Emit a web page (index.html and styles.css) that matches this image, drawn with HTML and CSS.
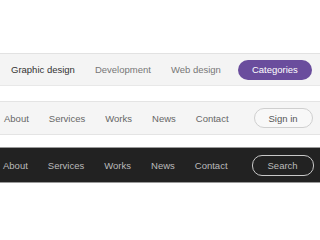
FILE: index.html
```html
<!DOCTYPE html>
<html lang="en">
<head>
    <meta charset="UTF-8">
    <title>Nav bars</title>
    <link rel="stylesheet" href="styles.css">
</head>
<body>
    <div class="bar bar_tabs">
        <a class="item active">Graphic design</a>
        <a class="item">Development</a>
        <a class="item">Web design</a>
        <a class="pill pill_purple">Categories</a>
    </div>
    <div class="bar bar_light">
        <a class="item">About</a>
        <a class="item">Services</a>
        <a class="item">Works</a>
        <a class="item">News</a>
        <a class="item">Contact</a>
        <a class="pill pill_light">Sign in</a>
    </div>
    <div class="bar bar_dark">
        <a class="item">About</a>
        <a class="item">Services</a>
        <a class="item">Works</a>
        <a class="item">News</a>
        <a class="item">Contact</a>
        <a class="pill pill_dark">Search</a>
    </div>
</body>
</html>
```

FILE: styles.css
```css
body {
    margin: 0;
    padding-top: 53px;
    background: #fff;
    font-family: "Liberation Sans", Arial, sans-serif;
    font-size: 9.5px;
}
.bar {
    box-sizing: border-box;
    display: flex;
    align-items: center;
    width: 320px;
}
.item {
    padding: 0 10px;
    white-space: nowrap;
}
.pill {
    box-sizing: border-box;
    display: flex;
    align-items: center;
    height: 20px;
    padding: 0 14px;
    border-radius: 10px;
    white-space: nowrap;
}
.bar_tabs {
    height: 33px;
    padding-left: 1px;
    background: #f4f4f4;
    border-top: 1px solid #e2e2e2;
    border-bottom: 1px solid #e8e8e8;
    color: #777;
}
.bar_tabs .active {
    color: #333;
}
.pill_purple {
    margin-left: 7px;
    background: #6a4d9d;
    color: #fff;
}
.bar_light {
    height: 34px;
    margin-top: 15px;
    padding-left: 0;
    margin-left: -6px;
    width: 326px;
    background: #f5f5f5;
    border-top: 1px solid #e4e4e4;
    border-bottom: 1px solid #e4e4e4;
    color: #666;
}
.pill_light {
    margin-left: 15px;
    border: 1px solid #cfcfcf;
    background: #f8f8f8;
    color: #555;
}
.bar_dark {
    height: 36px;
    margin-top: 12px;
    margin-left: -7px;
    width: 327px;
    background: #222;
    border-top: 1px solid #9a9a9a;
    border-bottom: 1px solid #9a9a9a;
    color: #bbb;
}
.pill_dark {
    height: 21px;
    margin-left: 14px;
    padding: 0 15px;
    border: 1px solid #c8c8c8;
    color: #bbb;
}
```
